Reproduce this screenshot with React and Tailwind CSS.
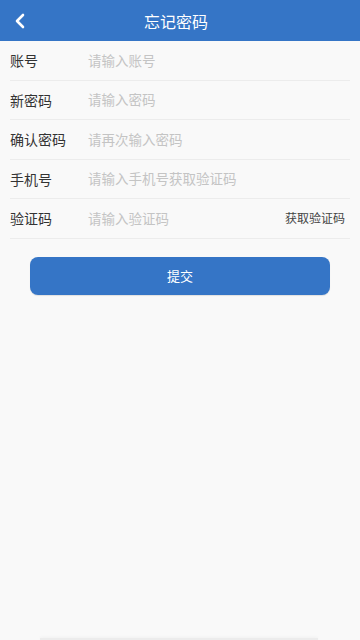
import React from "react";

const rows = [
  { label: "账号", ph: "请输入账号" },
  { label: "新密码", ph: "请输入密码" },
  { label: "确认密码", ph: "请再次输入密码" },
  { label: "手机号", ph: "请输入手机号获取验证码" },
  { label: "验证码", ph: "请输入验证码", extra: "获取验证码" },
];

export default function App() {
  return (
    <div
      className="w-[360px] h-[640px] bg-[#f9f9f9] flex flex-col overflow-hidden"
      style={{ fontFamily: '"Noto Sans CJK SC", "Noto Sans", sans-serif' }}
    >
      <div className="h-[41px] bg-[#3575c6] flex items-center relative shrink-0">
        <div className="w-[40px] flex items-center justify-center">
          <svg width="12" height="16" viewBox="0 0 12 16" className="ml-[-1px]">
            <path d="M9 2 L3 8 L9 14" fill="none" stroke="#fff" strokeWidth="2.6" strokeLinecap="round" strokeLinejoin="round" />
          </svg>
        </div>
        <div className="flex-1 text-center text-white text-[16px] leading-none mr-[48px]">忘记密码</div>
      </div>
      <div className="px-[10px] flex flex-col">
        {rows.map((r) => (
          <div key={r.label} className="h-[39.5px] flex items-center border-b border-[#ececec]">
            <div className="w-[78px] text-[14px] text-[#333] leading-none">{r.label}</div>
            <div className="flex-1 text-[13.5px] text-[#c4c4c4] leading-none">{r.ph}</div>
            {r.extra && <div className="text-[12px] text-[#444] leading-none pr-[5px]">{r.extra}</div>}
          </div>
        ))}
      </div>
      <div className="px-[30px] mt-[18px]">
        <div className="h-[38px] rounded-[8px] bg-[#3575c6] flex items-center justify-center text-white text-[13px] shadow-[0_1px_1px_rgba(0,0,0,0.1)]">
          提交
        </div>
      </div>
      <div className="flex-1" />
      <div className="mx-[40px] w-[278px] h-[2px] bg-[#ececec] shadow-[0_-1px_3px_rgba(0,0,0,0.04)]" />
    </div>
  );
}
